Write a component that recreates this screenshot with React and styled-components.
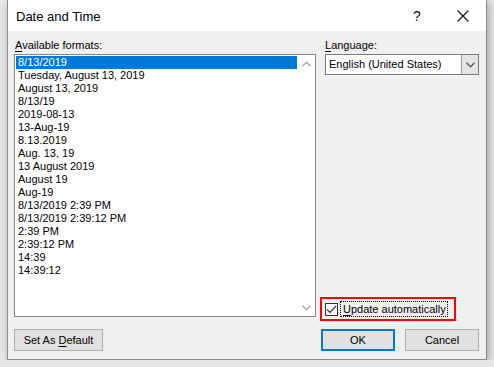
import React from "react";
import styled, { createGlobalStyle } from "styled-components";

const Global = createGlobalStyle`
  html, body { margin: 0; padding: 0; }
  body {
    background: #e6e6e6;
    font-family: "Liberation Sans", Arial, sans-serif;
    font-size: 11px;
    color: #000;
    overflow: hidden;
  }
`;

const Window = styled.div`
  box-sizing: border-box;
  margin-left: 7px;
  width: 480px;
  height: 360px;
  border: 1px solid #8c8c8c;
  border-top: none;
  background: #f0f0f0;
  display: flex;
  flex-direction: column;
  box-shadow: 2px 2px 8px rgba(0, 0, 0, 0.28);
`;

const TitleBar = styled.div`
  height: 31px;
  background: #fff;
  display: flex;
  align-items: center;
  padding-left: 8px;
`;

const Title = styled.div`
  flex: 1;
  font-size: 13px;
  padding-top: 1px;
`;

const TitleButton = styled.div`
  width: ${(p) => p.$w}px;
  height: 31px;
  display: flex;
  align-items: center;
  justify-content: center;
  font-size: 14px;
  color: #111;
`;

const Body = styled.div`
  flex: 1;
  display: flex;
  flex-direction: column;
  padding: 7px 7px 0 6px;
`;

const Main = styled.div`
  display: grid;
  grid-template-columns: 302px 154px;
  column-gap: 9px;
`;

const Column = styled.div`
  display: flex;
  flex-direction: column;
`;

const Label = styled.div`
  height: 14px;
  line-height: 14px;
  margin-bottom: 2px;
  padding-left: ${(p) => p.$pl || 0}px;
`;

const U = styled.span`
  text-decoration: underline;
  text-underline-offset: 2px;
`;

const ListBox = styled.div`
  box-sizing: border-box;
  height: 263px;
  border: 1px solid #828790;
  background: #fff;
  display: flex;
`;

const Items = styled.div`
  flex: 1;
  min-width: 0;
  padding: 1px 0 0 1px;
`;

const Item = styled.div`
  height: 13px;
  line-height: 13px;
  padding-left: 2px;
  white-space: nowrap;
  background: ${(p) => (p.$selected ? "#0078d7" : "transparent")};
  color: ${(p) => (p.$selected ? "#fff" : "#000")};
`;

const ScrollBar = styled.div`
  width: 18px;
  flex: none;
  display: flex;
  flex-direction: column;
  justify-content: space-between;
`;

const ArrowCell = styled.div`
  height: 17px;
  display: flex;
  align-items: center;
  justify-content: center;
  padding-left: 1px;
`;

const Select = styled.div`
  box-sizing: border-box;
  height: 21px;
  border: 1px solid #7a7a7a;
  background: #fff;
  display: flex;
`;

const SelectText = styled.div`
  flex: 1;
  line-height: 19px;
  padding-left: 3px;
`;

const SelectButton = styled.div`
  width: 16px;
  border-left: 1px solid #9a9a9a;
  background: #e5e5e5;
  display: flex;
  align-items: center;
  justify-content: center;
`;

const Spacer = styled.div`
  flex: 1;
`;

const Highlight = styled.div`
  box-sizing: border-box;
  width: 136px;
  height: 24px;
  margin-left: -5px;
  margin-bottom: -4px;
  border: 2px solid #ff0000;
  display: flex;
  align-items: center;
  padding-left: 3px;
`;

const CheckBox = styled.div`
  box-sizing: border-box;
  width: 13px;
  height: 13px;
  border: 1px solid #333;
  background: #fff;
  display: flex;
  align-items: center;
  justify-content: center;
`;

const CheckLabel = styled.div`
  margin-left: 2px;
  height: 16px;
  line-height: 14px;
  box-sizing: border-box;
  padding: 0 1px 0 2px;
  border: 1px dotted #000;
  white-space: nowrap;
`;

const ButtonRow = styled.div`
  margin-top: 12px;
  display: flex;
  justify-content: space-between;
`;

const Buttons = styled.div`
  display: flex;
  gap: 10px;
`;

const Button = styled.div`
  box-sizing: border-box;
  width: ${(p) => p.$w}px;
  height: 22px;
  background: #e1e1e1;
  border: ${(p) => (p.$default ? "2px solid #0078d7" : "1px solid #adadad")};
  display: flex;
  align-items: center;
  justify-content: center;
`;

const Chevron = ({ up, color = "#a8a8a8" }) => (
  <svg width="9" height="6" viewBox="0 0 9 6" style={{ display: "block" }}>
    <polyline
      points={up ? "0.5,5.2 4.5,1.2 8.5,5.2" : "0.5,0.8 4.5,4.8 8.5,0.8"}
      fill="none"
      stroke={color}
      strokeWidth="1.3"
    />
  </svg>
);

const formats = [
  "8/13/2019",
  "Tuesday, August 13, 2019",
  "August 13, 2019",
  "8/13/19",
  "2019-08-13",
  "13-Aug-19",
  "8.13.2019",
  "Aug. 13, 19",
  "13 August 2019",
  "August 19",
  "Aug-19",
  "8/13/2019 2:39 PM",
  "8/13/2019 2:39:12 PM",
  "2:39 PM",
  "2:39:12 PM",
  "14:39",
  "14:39:12",
];

export default function App() {
  return (
    <>
      <Global />
      <Window>
        <TitleBar>
          <Title>Date and Time</Title>
          <TitleButton $w={46}>?</TitleButton>
          <TitleButton $w={46}>
            <svg width="12" height="12" viewBox="0 0 12 12">
              <path d="M0.5 0.5 L11.5 11.5 M11.5 0.5 L0.5 11.5" stroke="#111" strokeWidth="1.1" />
            </svg>
          </TitleButton>
        </TitleBar>
        <Body>
          <Main>
            <Column>
              <Label $pl={1}>
                <U>A</U>vailable formats:
              </Label>
              <ListBox>
                <Items>
                  {formats.map((f, i) => (
                    <Item key={i} $selected={i === 0}>
                      {f}
                    </Item>
                  ))}
                </Items>
                <ScrollBar>
                  <ArrowCell>
                    <Chevron up />
                  </ArrowCell>
                  <ArrowCell>
                    <Chevron />
                  </ArrowCell>
                </ScrollBar>
              </ListBox>
            </Column>
            <Column>
              <Label>
                <U>L</U>anguage:
              </Label>
              <Select>
                <SelectText>English (United States)</SelectText>
                <SelectButton>
                  <Chevron color="#555" />
                </SelectButton>
              </Select>
              <Spacer />
              <Highlight>
                <CheckBox>
                  <svg width="11" height="9" viewBox="0 0 11 9">
                    <path d="M1 4.5 L4 7.5 L10 1" fill="none" stroke="#333" strokeWidth="1.2" />
                  </svg>
                </CheckBox>
                <CheckLabel>
                  <U>U</U>pdate automatically
                </CheckLabel>
              </Highlight>
            </Column>
          </Main>
          <ButtonRow>
            <Button $w={89}>
              Set As&nbsp;<U>D</U>efault
            </Button>
            <Buttons>
              <Button $w={74} $default>
                OK
              </Button>
              <Button $w={74}>Cancel</Button>
            </Buttons>
          </ButtonRow>
        </Body>
      </Window>
    </>
  );
}
